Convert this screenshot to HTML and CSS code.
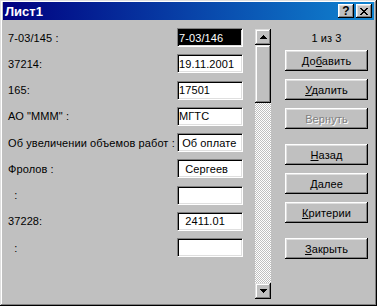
FILE: index.html
```html
<!DOCTYPE html>
<html>
<head>
    <meta charset="utf-8">
    <title>Лист1</title>
    <link rel="stylesheet" href="styles.css">
</head>
<body>
    <div class="window">
        <div class="titlebar">
            <span class="title">Лист1</span>
            <span class="caption-btn help">?</span>
            <span class="caption-btn close">
                <svg width="8" height="7" viewBox="0 0 8 7"><path d="M0 0h2v1H0zM6 0h2v1H6zM1 1h2v1H1zM5 1h2v1H5zM2 2h4v1H2zM3 3h2v1H3zM2 4h4v1H2zM1 5h2v1H1zM5 5h2v1H5zM0 6h2v1H0zM6 6h2v1H6z" fill="#000"/></svg>
            </span>
        </div>

        <div class="body">
            <div class="fields">
                <div class="row">
                    <span class="label">7-03/145 :</span>
                    <span class="textbox selected"><span>7-03/146</span></span>
                </div>
                <div class="row">
                    <span class="label">37214:</span>
                    <span class="textbox">19.11.2001</span>
                </div>
                <div class="row">
                    <span class="label">165:</span>
                    <span class="textbox">17501</span>
                </div>
                <div class="row">
                    <span class="label">АО "МММ" :</span>
                    <span class="textbox">МГТС</span>
                </div>
                <div class="row">
                    <span class="label">Об увеличении объемов работ :</span>
                    <span class="textbox"> Об оплате</span>
                </div>
                <div class="row">
                    <span class="label">Фролов :</span>
                    <span class="textbox">  Сергеев</span>
                </div>
                <div class="row">
                    <span class="label">  :</span>
                    <span class="textbox"></span>
                </div>
                <div class="row">
                    <span class="label">37228:</span>
                    <span class="textbox">  2411.01</span>
                </div>
                <div class="row">
                    <span class="label">  :</span>
                    <span class="textbox"></span>
                </div>
            </div>

            <div class="scrollbar">
                <span class="scroll-btn">
                    <svg width="7" height="4" viewBox="0 0 7 4"><path d="M3 0h1v1H3zM2 1h3v1H2zM1 2h5v1H1zM0 3h7v1H0z" fill="#000"/></svg>
                </span>
                <span class="thumb"></span>
                <span class="track"></span>
                <span class="scroll-btn">
                    <svg width="7" height="4" viewBox="0 0 7 4"><path d="M0 0h7v1H0zM1 1h5v1H1zM2 2h3v1H2zM3 3h1v1H3z" fill="#000"/></svg>
                </span>
            </div>

            <div class="side">
                <div class="counter">1 из 3</div>
                <button class="btn">До<u>б</u>авить</button>
                <button class="btn"><u>У</u>далить</button>
                <button class="btn" disabled>Вернуть</button>
                <button class="btn group-start"><u>Н</u>азад</button>
                <button class="btn"><u>Д</u>алее</button>
                <button class="btn"><u>К</u>ритерии</button>
                <button class="btn group-start"><u>З</u>акрыть</button>
            </div>
        </div>
    </div>
</body>
</html>
```

FILE: styles.css
```css
body {
    margin: 0;
    font-family: "Liberation Sans", Arial, sans-serif;
    font-size: 11px;
    letter-spacing: 0.1px;
    color: #000;
}

.window {
    width: 377px;
    height: 306px;
    box-sizing: border-box;
    padding: 2px 3px 3px 3px;
    background-color: #c0c0c0;
    box-shadow: inset -1px -1px #000, inset 1px 1px #dfdfdf, inset -2px -2px #808080, inset 2px 2px #fff;
    display: flex;
    flex-direction: column;
}

.titlebar {
    height: 18px;
    padding: 0 2px;
    display: flex;
    align-items: center;
    background: linear-gradient(to right, #000080, #1084d0);
    color: white;
    font-weight: bold;
    font-size: 13px;
    letter-spacing: 0;
}

.title {
    flex: 1;
}

.caption-btn {
    width: 16px;
    height: 14px;
    box-sizing: border-box;
    display: flex;
    align-items: center;
    justify-content: center;
    background-color: #c0c0c0;
    box-shadow: inset -1px -1px #000, inset 1px 1px #fff, inset -2px -2px #808080, inset 2px 2px #dfdfdf;
    color: #000;
    font-size: 12px;
    font-weight: bold;
}

.caption-btn.close {
    margin-left: 2px;
}

.body {
    flex: 1;
    display: flex;
    padding: 8px 6px 0 5px;
}

.fields {
    width: 235px;
    display: flex;
    flex-direction: column;
    gap: 7.25px;
}

.row {
    height: 19px;
    display: flex;
    align-items: center;
}

.label {
    flex: 1;
    white-space: pre;
}

.textbox {
    width: 66px;
    height: 19px;
    box-sizing: border-box;
    padding: 0 1px;
    display: flex;
    align-items: center;
    overflow: hidden;
    white-space: pre;
    background-color: white;
    border: 1px solid;
    border-color: #808080 #fff #fff #808080;
    box-shadow: inset 1px 1px #000, inset -1px -1px #dfdfdf;
}

.textbox.selected {
    padding: 1px;
}

.textbox.selected span {
    flex: 1;
    align-self: stretch;
    display: flex;
    align-items: center;
    background-color: #000;
    color: white;
}

.scrollbar {
    width: 16px;
    height: 270px;
    margin: 1px 0 0 12px;
    display: flex;
    flex-direction: column;
}

.scroll-btn {
    height: 16px;
    display: flex;
    align-items: center;
    justify-content: center;
    background-color: #c0c0c0;
    box-shadow: inset -1px -1px #000, inset 1px 1px #dfdfdf, inset -2px -2px #808080, inset 2px 2px #fff;
}

.thumb {
    height: 58px;
    background-color: #c0c0c0;
    box-shadow: inset -1px -1px #000, inset 1px 1px #dfdfdf, inset -2px -2px #808080, inset 2px 2px #fff;
}

.track {
    flex: 1;
    background: repeating-conic-gradient(#fff 0 25%, #c0c0c0 0 50%) 0 0 / 2px 2px;
}

.side {
    width: 83px;
    margin-left: 14px;
    display: flex;
    flex-direction: column;
    gap: 8px;
}

.counter {
    height: 19px;
    margin-bottom: -5px;
    display: flex;
    align-items: center;
    justify-content: center;
}

.btn {
    height: 21px;
    padding: 0;
    border: none;
    background-color: #c0c0c0;
    box-shadow: inset -1px -1px #000, inset 1px 1px #fff, inset -2px -2px #808080, inset 2px 2px #dfdfdf;
    font-family: inherit;
    font-size: 11px;
    letter-spacing: 0.1px;
    color: #000;
}

.btn:disabled {
    color: #808080;
    text-shadow: 1px 1px #fff;
}

.group-start {
    margin-top: 7px;
}
```
